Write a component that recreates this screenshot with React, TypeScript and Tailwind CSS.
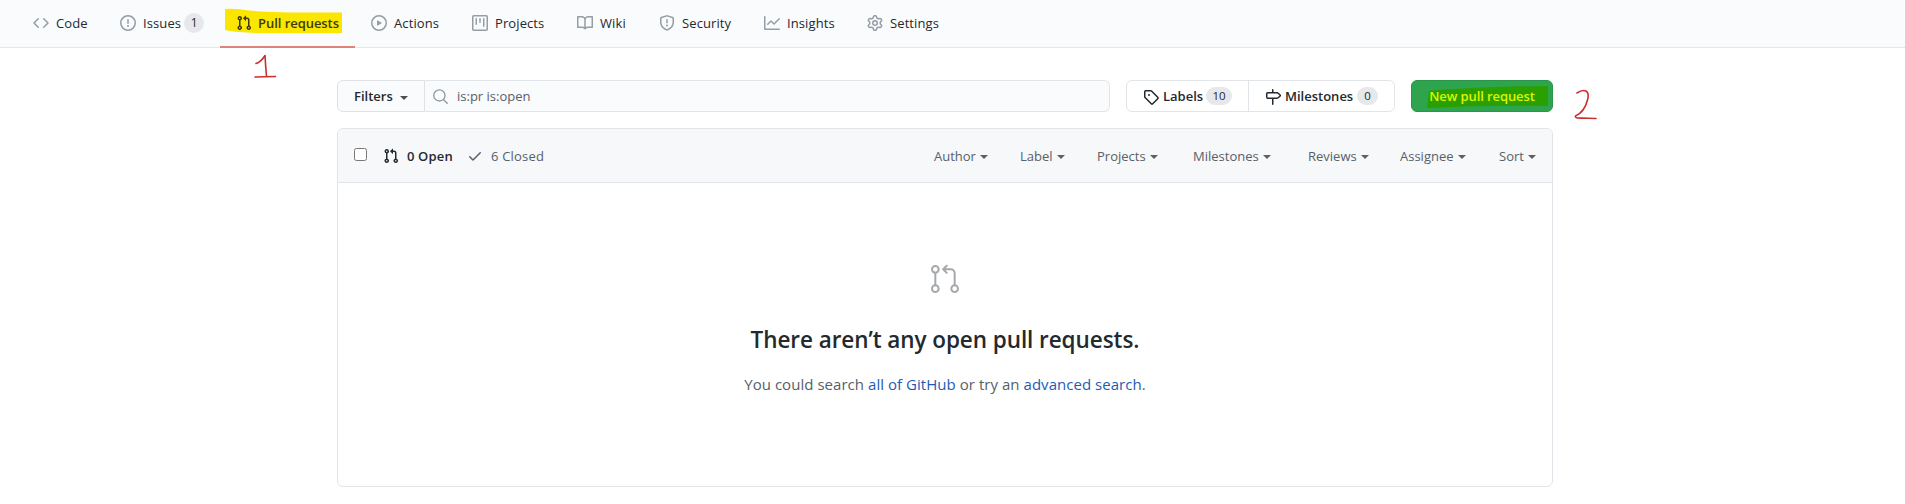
import React from "react";

const paths = {
  code: "M4.72 3.22a.75.75 0 011.06 1.06L2.06 8l3.72 3.72a.75.75 0 11-1.06 1.06L.47 8.53a.75.75 0 010-1.06l4.25-4.25zm6.56 0a.75.75 0 10-1.06 1.06L13.94 8l-3.72 3.72a.75.75 0 101.06 1.06l4.25-4.25a.75.75 0 000-1.06l-4.25-4.25z",
  issue: "M8 1.5a6.5 6.5 0 100 13 6.5 6.5 0 000-13zM0 8a8 8 0 1116 0A8 8 0 010 8zm9 3a1 1 0 11-2 0 1 1 0 012 0zm-.25-6.25a.75.75 0 00-1.5 0v3.5a.75.75 0 001.5 0v-3.5z",
  pull: "M7.177 3.073L9.573.677A.25.25 0 0110 .854v4.792a.25.25 0 01-.427.177L7.177 3.427a.25.25 0 010-.354zM3.75 2.5a.75.75 0 100 1.5.75.75 0 000-1.5zm-2.25.75a2.25 2.25 0 113 2.122v5.256a2.251 2.251 0 11-1.5 0V5.372A2.25 2.25 0 011.5 3.25zM11 2.5h-1V4h1a1 1 0 011 1v5.628a2.251 2.251 0 101.5 0V5A2.5 2.5 0 0011 2.5zm1 10.25a.75.75 0 111.5 0 .75.75 0 01-1.5 0zM3.75 12a.75.75 0 100 1.5.75.75 0 000-1.5z",
  play: "M1.5 8a6.5 6.5 0 1113 0 6.5 6.5 0 01-13 0zM8 0a8 8 0 100 16A8 8 0 008 0zM6.379 5.227A.25.25 0 006 5.442v5.117a.25.25 0 00.379.214l4.264-2.559a.25.25 0 000-.428L6.379 5.227z",
  project: "M1.75 0A1.75 1.75 0 000 1.75v12.5C0 15.216.784 16 1.75 16h12.5A1.75 1.75 0 0016 14.25V1.75A1.75 1.75 0 0014.25 0H1.75zM1.5 1.75a.25.25 0 01.25-.25h12.5a.25.25 0 01.25.25v12.5a.25.25 0 01-.25.25H1.75a.25.25 0 01-.25-.25V1.75zM11.75 3a.75.75 0 00-.75.75v7.5a.75.75 0 001.5 0v-7.5a.75.75 0 00-.75-.75zm-8.25.75a.75.75 0 011.5 0v5.5a.75.75 0 01-1.5 0v-5.5zM8 3a.75.75 0 00-.75.75v3.5a.75.75 0 001.5 0v-3.5A.75.75 0 008 3z",
  book: "M0 1.75A.75.75 0 01.75 1h4.253c1.227 0 2.317.59 3 1.501A3.744 3.744 0 0111.006 1h4.245a.75.75 0 01.75.75v10.5a.75.75 0 01-.75.75h-4.507a2.25 2.25 0 00-1.591.659l-.622.621a.75.75 0 01-1.06 0l-.622-.621A2.25 2.25 0 005.258 13H.75a.75.75 0 01-.75-.75V1.75zm8.755 3a2.25 2.25 0 012.25-2.25H14.5v9h-3.757c-.71 0-1.4.201-1.992.572l.004-7.322zm-1.504 7.324l.004-5.073-.002-2.253A2.25 2.25 0 005.003 2.5H1.5v9h3.757a3.75 3.75 0 011.994.574z",
  shield: "M7.467.133a1.75 1.75 0 011.066 0l5.25 1.68A1.75 1.75 0 0115 3.48V7c0 1.566-.32 3.182-1.303 4.682-.983 1.498-2.585 2.813-5.032 3.855a1.7 1.7 0 01-1.33 0c-2.447-1.042-4.049-2.357-5.032-3.855C1.32 10.182 1 8.566 1 7V3.48a1.75 1.75 0 011.217-1.667l5.25-1.68zm.61 1.429a.25.25 0 00-.153 0l-5.25 1.68a.25.25 0 00-.174.238V7c0 1.358.275 2.666 1.057 3.86.784 1.194 2.121 2.34 4.366 3.297a.2.2 0 00.154 0c2.245-.956 3.582-2.104 4.366-3.298C13.225 9.666 13.5 8.36 13.5 7V3.48a.25.25 0 00-.174-.237l-5.25-1.68zM9 10.5a1 1 0 11-2 0 1 1 0 012 0zm-.25-5.75a.75.75 0 10-1.5 0v3a.75.75 0 001.5 0v-3z",
  graph: "M1.5 1.75a.75.75 0 00-1.5 0v12.5c0 .414.336.75.75.75h14.5a.75.75 0 000-1.5H1.5V1.75zm14.28 2.53a.75.75 0 00-1.06-1.06L10 7.94 7.53 5.47a.75.75 0 00-1.06 0L3.22 8.72a.75.75 0 001.06 1.06L7 7.06l2.47 2.47a.75.75 0 001.06 0l5.25-5.25z",
  gear: "M7.429 1.525a6.593 6.593 0 011.142 0c.036.003.108.036.137.146l.289 1.105c.147.56.55.967.997 1.189.174.086.341.183.501.29.417.278.97.423 1.53.27l1.102-.303c.11-.03.175.016.195.046.219.31.41.641.573.989.014.031.022.11-.059.19l-.815.806c-.411.406-.562.957-.53 1.456a4.588 4.588 0 010 .582c-.032.499.119 1.05.53 1.456l.815.806c.08.08.073.159.059.19a6.494 6.494 0 01-.573.99c-.02.029-.086.074-.195.045l-1.103-.303c-.559-.153-1.112-.008-1.529.27-.16.107-.327.204-.5.29-.449.222-.851.628-.998 1.189l-.289 1.105c-.029.11-.101.143-.137.146a6.613 6.613 0 01-1.142 0c-.036-.003-.108-.037-.137-.146l-.289-1.105c-.147-.56-.55-.967-.997-1.189a4.502 4.502 0 01-.501-.29c-.417-.278-.97-.423-1.53-.27l-1.102.303c-.11.03-.175-.016-.195-.046a6.492 6.492 0 01-.573-.989c-.014-.031-.022-.11.059-.19l.815-.806c.411-.406.562-.957.53-1.456a4.587 4.587 0 010-.582c.032-.499-.119-1.05-.53-1.456l-.815-.806c-.08-.08-.073-.159-.059-.19a6.44 6.44 0 01.573-.99c.02-.029.086-.075.195-.045l1.103.303c.559.153 1.112.008 1.529-.27.16-.107.327-.204.5-.29.449-.222.851-.628.998-1.189l.289-1.105c.029-.11.101-.143.137-.146zM8 0c-.236 0-.47.01-.701.03-.743.065-1.29.615-1.458 1.261l-.29 1.106c-.017.066-.078.158-.211.224a5.994 5.994 0 00-.668.386c-.123.082-.233.09-.3.071L3.27 2.776c-.644-.177-1.392.02-1.82.63a7.977 7.977 0 00-.704 1.217c-.315.675-.111 1.422.363 1.891l.815.806c.05.048.098.147.088.294a6.084 6.084 0 000 .772c.01.147-.038.246-.088.294l-.815.806c-.474.469-.678 1.216-.363 1.891.2.428.436.835.704 1.218.428.609 1.176.806 1.82.63l1.103-.303c.066-.019.176-.011.299.071.213.143.436.272.668.386.133.066.194.158.212.224l.289 1.106c.169.646.715 1.196 1.458 1.26a8.094 8.094 0 001.402 0c.743-.064 1.29-.614 1.458-1.26l.29-1.106c.017-.066.078-.158.211-.224a5.98 5.98 0 00.668-.386c.123-.082.233-.09.3-.071l1.102.302c.644.177 1.392-.02 1.82-.63.268-.382.505-.789.704-1.217.315-.675.111-1.422-.364-1.891l-.814-.806c-.05-.048-.098-.147-.088-.294a6.1 6.1 0 000-.772c-.01-.147.039-.246.088-.294l.814-.806c.475-.469.679-1.216.364-1.891a7.992 7.992 0 00-.704-1.218c-.428-.609-1.176-.806-1.82-.63l-1.103.303c-.066.019-.176.011-.299-.071a5.991 5.991 0 00-.668-.386c-.133-.066-.194-.158-.212-.224L10.16 1.29C9.99.645 9.444.095 8.701.031A8.094 8.094 0 008 0zm1.5 8a1.5 1.5 0 11-3 0 1.5 1.5 0 013 0zM11 8a3 3 0 11-6 0 3 3 0 016 0z",
  tag: "M2.5 7.775V2.75a.25.25 0 01.25-.25h5.025a.25.25 0 01.177.073l6.25 6.25a.25.25 0 010 .354l-5.025 5.025a.25.25 0 01-.354 0l-6.25-6.25a.25.25 0 01-.073-.177zm-1.5 0V2.75C1 1.784 1.784 1 2.75 1h5.025c.464 0 .91.184 1.238.513l6.25 6.25a1.75 1.75 0 010 2.474l-5.026 5.026a1.75 1.75 0 01-2.474 0l-6.25-6.25A1.75 1.75 0 011 7.775zM6 5a1 1 0 100 2 1 1 0 000-2z",
  milestone: "M7.75 0a.75.75 0 01.75.75V3h3.634c.414 0 .814.147 1.13.414l2.07 1.75a1.75 1.75 0 010 2.672l-2.07 1.75a1.75 1.75 0 01-1.13.414H8.5v5.25a.75.75 0 11-1.5 0V10H2.75A1.75 1.75 0 011 8.25v-3.5C1 3.784 1.784 3 2.75 3H7V.75A.75.75 0 017.75 0zm0 8.5h4.384a.25.25 0 00.161-.06l2.07-1.75a.25.25 0 000-.38l-2.07-1.75a.25.25 0 00-.161-.06H2.75a.25.25 0 00-.25.25v3.5c0 .138.112.25.25.25h5z",
  check: "M13.78 4.22a.75.75 0 010 1.06l-7.25 7.25a.75.75 0 01-1.06 0L2.22 9.28a.75.75 0 011.06-1.06L6 10.94l6.72-6.72a.75.75 0 011.06 0z",
};

type IconName = keyof typeof paths;

function Icon({ name, className = "" }: { name: IconName; className?: string }) {
  return (
    <svg viewBox="0 0 16 16" className={`h-4 w-4 shrink-0 fill-current ${className}`} fillRule="evenodd" aria-hidden="true">
      <path fillRule="evenodd" d={paths[name]} />
    </svg>
  );
}

function Caret({ className = "" }: { className?: string }) {
  return (
    <svg viewBox="0 0 8 4" className={`h-1 w-2 shrink-0 fill-current ${className}`} aria-hidden="true">
      <path d="M0 0h8L4 4z" />
    </svg>
  );
}

const tabs: { label: string; icon: IconName; width: string; count?: number; selected?: boolean }[] = [
  { label: "Code", icon: "code", width: "w-[87px]" },
  { label: "Issues", icon: "issue", width: "w-[100px]", count: 1 },
  { label: "Pull requests", icon: "pull", width: "w-[151px]", selected: true },
  { label: "Actions", icon: "play", width: "w-[101px]" },
  { label: "Projects", icon: "project", width: "w-[105px]" },
  { label: "Wiki", icon: "book", width: "w-[82px]" },
  { label: "Security", icon: "shield", width: "w-[105px]" },
  { label: "Insights", icon: "graph", width: "w-[103px]" },
  { label: "Settings", icon: "gear", width: "w-[100px]" },
];

const menus = [
  { label: "Author", width: "w-[86px]" },
  { label: "Label", width: "w-[77px]" },
  { label: "Projects", width: "w-[96px]" },
  { label: "Milestones", width: "w-[115px]" },
  { label: "Reviews", width: "w-[92px]" },
  { label: "Assignee", width: "w-[99px]" },
  { label: "Sort", width: "w-[37px]" },
];

function Tab({ label, icon, width, count, selected }: (typeof tabs)[number]) {
  return (
    <a className={`relative flex h-12 shrink-0 items-center pb-0.5 ${width} ${selected ? "pl-4" : ""}`}>
      {selected && (
        <>
          <svg className="absolute left-[5px] top-2 h-[26px] w-[118px] fill-[#fbe600]" viewBox="0 0 118 26" aria-hidden="true">
            <path d="M0 1Q10 0 24 2.5Q50 5 117 4.5V25H38Q14 25 0 22z" />
          </svg>
          <span className="absolute left-0 bottom-0 h-0.5 w-[135px] bg-[#dc857d]" />
        </>
      )}
      <Icon name={icon} className={`relative ${selected ? "text-[#3a3a0c]" : "text-[#959da5]"}`} />
      <span className={`relative ${selected ? "ml-1.5 font-[550] tracking-[-0.05px] text-[#3b3c0b]" : "ml-[7px] tracking-[0.1px]"}`}>{label}</span>
      {count !== undefined && (
        <span className="ml-[3px] flex h-5 w-5 items-center justify-center rounded-full bg-[#e6e8eb] text-xs">{count}</span>
      )}
    </a>
  );
}

function Count({ children, className }: { children: React.ReactNode; className: string }) {
  return (
    <span className={`flex h-[18px] items-center justify-center rounded-full bg-[#e6e8eb] text-[11.5px] font-medium ${className}`}>{children}</span>
  );
}

export default function App() {
  return (
    <div className="relative h-[504px] w-[1905px] overflow-hidden bg-white font-['Open_Sans','Noto_Sans',sans-serif] text-[13px] leading-5 whitespace-nowrap text-[#24292e]">
      <nav className="flex h-12 border-b border-[#e4e7eb] bg-[#fafbfc] pl-[33px]">
        {tabs.map((t) => (
          <Tab key={t.label} {...t} />
        ))}
      </nav>

      <main className="ml-[337px] w-[1216px] pt-8">
        <div className="flex h-8">
          <button className="flex w-[88px] items-center rounded-l-md border border-[#dfe1e4] bg-[#fafbfc] pl-4 font-[550]">
            <span className="w-[38px] text-left">Filters</span>
            <Caret className="mt-[3px] ml-2 text-[#4a4f55]" />
          </button>
          <div className="flex w-[685px] items-center rounded-r-md border border-l-0 border-[#e1e4e8] bg-[#fafbfc] pl-2 text-[#586069]">
            <svg viewBox="0 0 16 16" className="mt-0.5 h-4 w-4 fill-none stroke-[#8f969d] stroke-[1.3]" aria-hidden="true">
              <circle cx="6.4" cy="6.4" r="5.6" />
              <path d="M10.5 10.5L14.7 14.7" />
            </svg>
            <span className="ml-2">is:pr is:open</span>
          </div>
          <div className="ml-4 flex w-[269px] rounded-md border border-[#e1e4e8] font-[550]">
            <a className="flex w-[122px] items-center border-r border-[#e1e4e8] pl-4">
              <Icon name="tag" className="mt-0.5" />
              <span className="ml-1 w-[39px]">Labels</span>
              <Count className="ml-1 w-[26px]">10</Count>
            </a>
            <a className="flex items-center pl-4">
              <Icon name="milestone" className="mt-0.5" />
              <span className="ml-1 w-[68px]">Milestones</span>
              <Count className="ml-1 w-[21px]">0</Count>
            </a>
          </div>
          <button className="relative ml-4 flex w-[142px] items-center justify-center rounded-md border border-[#2b964a] bg-[#2ea44f] font-[650] text-[#dcf500]">
            <svg className="absolute left-[15px] top-[5px] h-[23px] w-[122px] fill-[#2aa000]" viewBox="0 0 122 23" aria-hidden="true">
              <path d="M2 5Q40 1 121 0V20Q60 19 0 22z" />
            </svg>
            <span className="relative tracking-[-0.1px]">New pull request</span>
          </button>
        </div>

        <section className="mt-4 h-[359px] rounded-md border border-[#e1e4e8]">
          <header className="flex h-[54px] items-center rounded-t-md border-b border-[#e1e4e8] bg-[#f6f8fa] pl-4 text-[#586069]">
            <span className="mb-[3px] h-[13px] w-[13px] rounded-[2.5px] border border-[#767676] bg-white" />
            <div className="flex w-[86px] items-center pl-4 font-[550] text-[#24292e]">
              <Icon name="pull" className="mt-px" />
              <span className="ml-2 tracking-[0.15px]">0 Open</span>
            </div>
            <div className="flex w-[464px] items-center pl-3.5">
              <Icon name="check" className="mt-px" />
              <span className="ml-2 tracking-[0.2px]">6 Closed</span>
            </div>
            <div className="ml-auto flex pr-4">
              {menus.map((m) => (
                <a key={m.label} className={`flex items-center ${m.width}`}>
                  {m.label}
                  <Caret className="mt-[3px] ml-1" />
                </a>
              ))}
            </div>
          </header>
          <div className="flex flex-col items-center pt-[80px]">
            <svg viewBox="0 0 24 24" className="h-8 w-8 fill-none stroke-[#a5a9ad] stroke-[1.5]" aria-hidden="true">
              <circle cx="4.75" cy="4.75" r="2.5" />
              <circle cx="4.75" cy="19.25" r="2.5" />
              <circle cx="19.25" cy="19.25" r="2.5" />
              <path d="M4.75 7.25v9.5M19.25 16.75V7.75a3 3 0 00-3-3h-5M13.3 2.1L10.6 4.75l2.7 2.65" strokeLinecap="round" strokeLinejoin="round" />
            </svg>
            <h3 className="mt-[27px] text-[22.5px] leading-9 font-[550] tracking-[-0.07px]">There aren’t any open pull requests.</h3>
            <p className="mt-3.5 text-[15px] leading-6 tracking-[0.04px] text-[#586069]">
              You could search <a className="text-[#1f5bb5]">all of GitHub</a> or try an <a className="text-[#1f5bb5]">advanced search</a>.
            </p>
          </div>
        </section>
      </main>

      <svg className="absolute left-[250px] top-[50px] h-8 w-8 fill-none stroke-[#c9302f] stroke-[1.6]" viewBox="0 0 32 32" strokeLinecap="round" strokeLinejoin="round" role="img" aria-label="1">
        <path d="M6 13.5Q11 12 15 5.5Q15.5 15 16.5 26.5M5 27Q15 26.5 25.500 26.500" />
      </svg>
      <svg className="absolute left-[1570px] top-[86px] h-9 w-8 fill-none stroke-[#c9302f] stroke-[1.6]" viewBox="0 0 32 36" strokeLinecap="round" strokeLinejoin="round" role="img" aria-label="2">
        <path d="M7 7Q12 3.500 16 5Q19.500 7 17.500 14Q14.500 26 5.500 30Q4.500 32.500 12 32Q18 32 26 32.500" />
      </svg>
    </div>
  );
}
